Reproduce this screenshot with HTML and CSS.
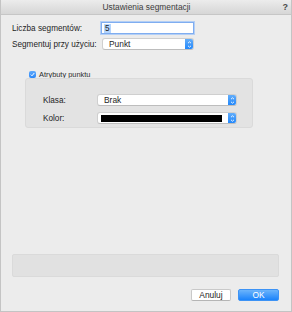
FILE: index.html
```html
<!DOCTYPE html>
<html lang="pl">
<head>
<meta charset="utf-8">
<title>Ustawienia segmentacji</title>
<link rel="stylesheet" href="styles.css">
</head>
<body>
<div class="window">
  <div class="titlebar">
    <span></span>
    <span class="title">Ustawienia segmentacji</span>
    <span class="help">?</span>
  </div>
  <div class="content">
    <div class="form">
      <label class="lbl">Liczba segmentów:</label>
      <div class="input"><span class="sel">5</span></div>
      <label class="lbl">Segmentuj przy użyciu:</label>
      <div class="popup">
        <span class="val">Punkt</span>
        <span class="stepper"><svg viewBox="0 0 9 11" width="9" height="11"><path d="M3 4.2 L4.5 2.8 L6 4.2 M3 6.8 L4.5 8.2 L6 6.8" fill="none" stroke="#fff" stroke-width="0.9"/></svg></span>
      </div>
    </div>
    <div class="check-row">
      <span class="checkbox"><svg viewBox="0 0 7 7" width="7" height="7"><path d="M1.8 3.6 L3 4.8 L5.3 2" fill="none" stroke="#fff" stroke-width="1"/></svg></span>
      <span class="check-label">Atrybuty punktu</span>
    </div>
    <div class="group">
      <label class="glbl">Klasa:</label>
      <div class="popup wide">
        <span class="val">Brak</span>
        <span class="stepper"><svg viewBox="0 0 9 11" width="9" height="11"><path d="M3 4.2 L4.5 2.8 L6 4.2 M3 6.8 L4.5 8.2 L6 6.8" fill="none" stroke="#fff" stroke-width="0.9"/></svg></span>
      </div>
      <label class="glbl">Kolor:</label>
      <div class="popup wide">
        <span class="swatch"></span>
        <span class="stepper"><svg viewBox="0 0 9 11" width="9" height="11"><path d="M3 4.2 L4.5 2.8 L6 4.2 M3 6.8 L4.5 8.2 L6 6.8" fill="none" stroke="#fff" stroke-width="0.9"/></svg></span>
      </div>
    </div>
    <div class="spacer"></div>
    <div class="status"></div>
    <div class="buttons">
      <button class="btn">Anuluj</button>
      <button class="btn primary">OK</button>
    </div>
  </div>
</div>
</body>
</html>
```
FILE: styles.css
```css
html, body {
  margin: 0;
  padding: 0;
  background: #ffffff;
}
body {
  font-family: "Liberation Sans", Arial, sans-serif;
  font-size: 8.2px;
  color: #1e1e1e;
}
.window {
  width: 292px;
  height: 312px;
  box-sizing: border-box;
  border: 1px solid #c4c4c4;
  border-top: none;
  background: #ececec;
  display: flex;
  flex-direction: column;
}
.titlebar {
  height: 15px;
  box-sizing: border-box;
  background: linear-gradient(#ececec, #d6d6d6);
  border-bottom: 1px solid #c6c6c6;
  display: grid;
  grid-template-columns: 20px 1fr 20px;
  align-items: center;
}
.title {
  text-align: center;
  font-size: 8.4px;
  color: #3c3c3c;
  padding-left: 1px;
}
.help {
  text-align: right;
  padding-right: 3px;
  font-weight: bold;
  font-size: 9px;
  color: #4a4a4a;
}
.content {
  flex: 1;
  display: flex;
  flex-direction: column;
  padding: 0 11px 10px 11px;
}
.form {
  display: grid;
  grid-template-columns: 89px 93px;
  grid-template-rows: 12px 12px;
  row-gap: 4px;
  margin-top: 7px;
  align-items: center;
}
.lbl {
  white-space: nowrap;
}
.input {
  height: 12px;
  box-sizing: border-box;
  background: #fff;
  border: 1px solid #7fadf0;
  box-shadow: 0 0 0 1px #b4cff5;
  display: flex;
  align-items: center;
  padding-left: 2px;
}
.sel {
  background: #b3d4fc;
  line-height: 9px;
  padding: 0 1px;
}
.popup {
  height: 12px;
  box-sizing: border-box;
  background: #fff;
  border: 1px solid #cfcfcf;
  border-bottom-color: #bdbdbd;
  border-radius: 3px;
  display: flex;
  align-items: center;
  margin-left: 1px;
  overflow: hidden;
}
.popup .val {
  flex: 1;
  padding-left: 6px;
  font-size: 8.4px;
}
.stepper {
  width: 9px;
  height: 12px;
  margin: -1px -1px -1px 0;
  background: linear-gradient(#69b1fa, #1c84fb);
  border-radius: 0 3px 3px 0;
  display: flex;
  align-items: center;
  justify-content: center;
}
.stepper svg {
  display: block;
}
.check-row {
  display: flex;
  align-items: center;
  gap: 3px;
  margin-top: 20px;
  margin-left: 17px;
  height: 8px;
}
.checkbox {
  width: 7px;
  height: 7px;
  border-radius: 2px;
  background: linear-gradient(#5fa9fb, #2a87f8);
  display: flex;
}
.check-label {
  font-size: 7.4px;
  color: #2a2a2a;
}
.group {
  margin: 0 27px 0 13px;
  height: 50px;
  box-sizing: border-box;
  background: #e3e3e3;
  border: 1px solid #dadada;
  border-radius: 3px;
  display: grid;
  grid-template-columns: 54px 1fr;
  grid-template-rows: 12px 12px;
  row-gap: 6px;
  align-content: start;
  padding: 15px 15px 0 17px;
  align-items: center;
}
.glbl {
  white-space: nowrap;
}
.popup.wide {
  margin-left: 0;
}
.swatch {
  flex: 1;
  height: 7px;
  margin: 0 6px 0 3px;
  background: #000;
}
.spacer {
  flex: 1;
}
.status {
  height: 23px;
  margin-right: 1px;
  background: #e1e1e1;
  border: 1px solid #dadada;
  border-radius: 2px;
  box-sizing: border-box;
}
.buttons {
  display: flex;
  justify-content: flex-end;
  gap: 7px;
  margin-top: 12px;
  margin-right: 1px;
}
.btn {
  height: 12px;
  width: 40px;
  box-sizing: border-box;
  padding: 0;
  font-family: "Liberation Sans", Arial, sans-serif;
  font-size: 8.4px;
  color: #222;
  background: #fff;
  border: 1px solid #c9c9c9;
  border-bottom-color: #b5b5b5;
  border-radius: 2px;
  line-height: 10px;
}
.btn.primary {
  width: 41px;
  color: #fff;
  background: linear-gradient(#6cb4fb, #1b83fb);
  border: 1px solid #3d93f5;
}
```
